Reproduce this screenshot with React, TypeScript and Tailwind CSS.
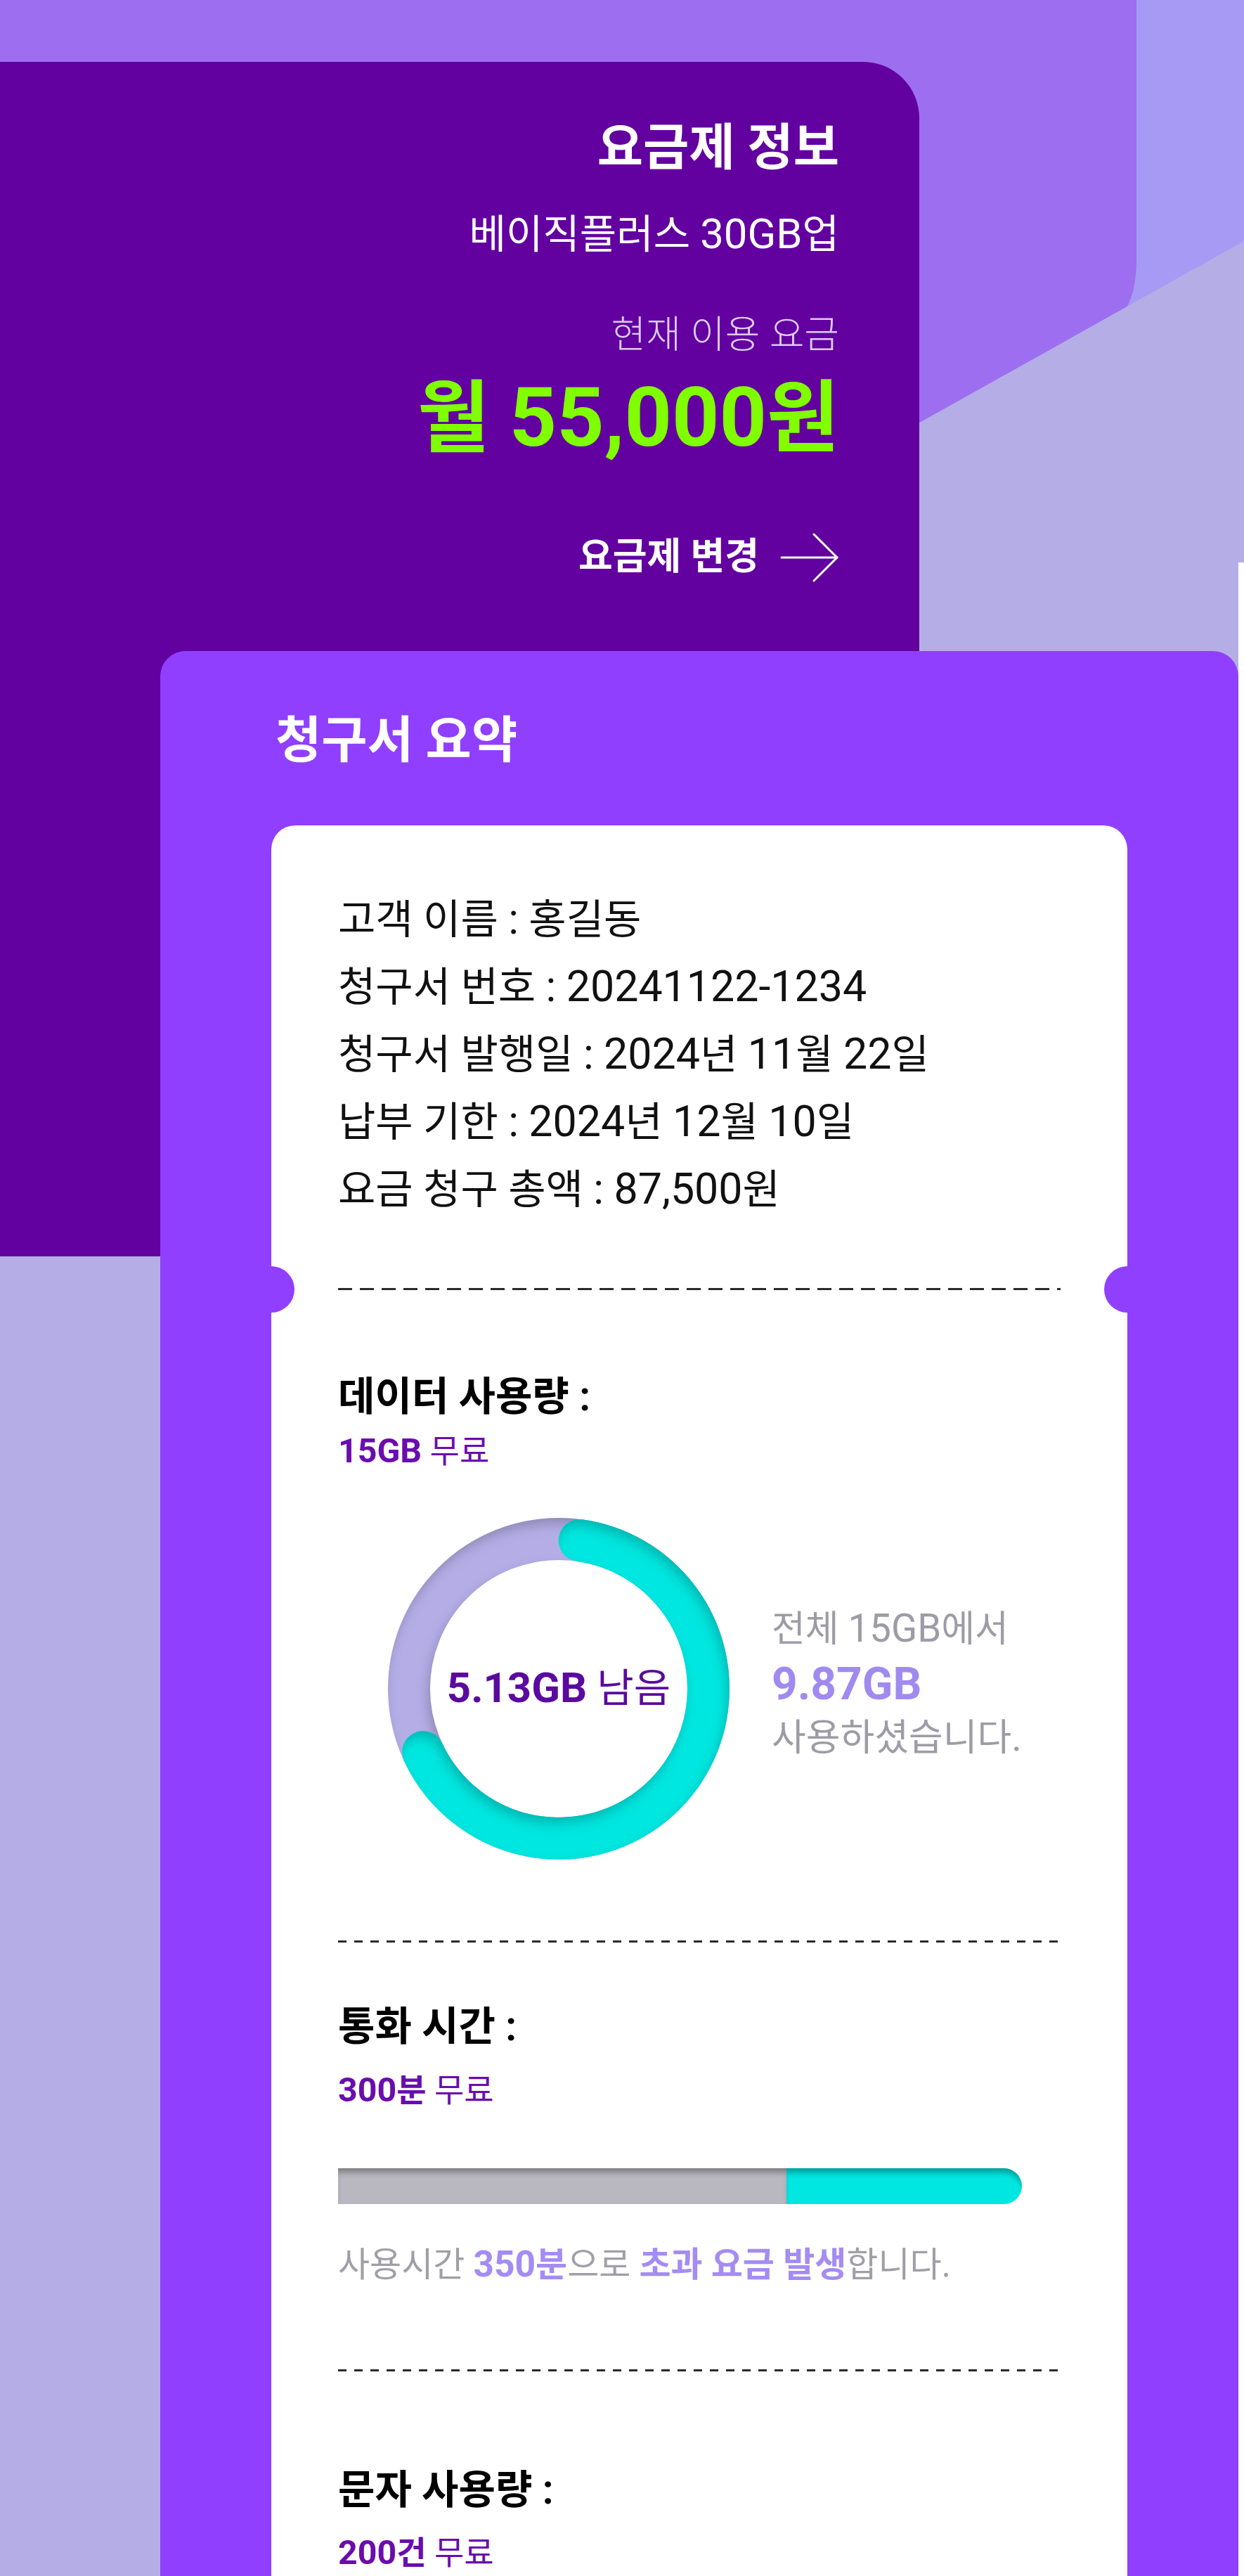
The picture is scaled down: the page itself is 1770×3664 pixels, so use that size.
import React from "react";

// 한글이 아닌 글자(숫자, 영문, 기호)는 조금 크게 보여준다
function mix(text: string) {
  return text.split(/([^\u3131-\u318E\uAC00-\uD7A3\s]+)/).map((part, i) =>
    i % 2 === 1 ? (
      <span key={i} className="text-[1.05em] leading-[0]">
        {part}
      </span>
    ) : (
      part
    )
  );
}

function Donut() {
  const r = 213;
  const c = 2 * Math.PI * r;
  const used = 9.87 / 15;
  return (
    <svg width="486" height="486" viewBox="0 0 486 486">
      <defs>
        <filter id="inner" x="-10%" y="-10%" width="120%" height="120%">
          <feOffset in="SourceAlpha" dx="-4" dy="9" result="off" />
          <feGaussianBlur in="off" stdDeviation="8" result="blur" />
          <feComposite in="SourceAlpha" in2="blur" operator="arithmetic" k2="1" k3="-1" result="diff" />
          <feFlood floodColor="#000" floodOpacity="0.4" />
          <feComposite in2="diff" operator="in" result="shadow" />
          <feMerge>
            <feMergeNode in="SourceGraphic" />
            <feMergeNode in="shadow" />
          </feMerge>
        </filter>
      </defs>
      <g filter="url(#inner)">
        <circle cx="243" cy="243" r={r} fill="none" stroke="#b4ade6" strokeWidth="60" />
      </g>
      <g filter="url(#inner)">
        <circle
          cx="243"
          cy="243"
          r={r}
          fill="none"
          stroke="#00e6e0"
          strokeWidth="60"
          strokeLinecap="round"
          strokeDasharray={`${used * c} ${c}`}
          transform="rotate(-82 243 243)"
        />
      </g>
    </svg>
  );
}

function Dots() {
  return <div className="h-[3px] bg-[repeating-linear-gradient(90deg,#2a2a2a_0_12px,transparent_12px_23px)]" />;
}

export default function App() {
  const info = [
    "고객 이름 : 홍길동",
    "청구서 번호 : 20241122-1234",
    "청구서 발행일 : 2024년 11월 22일",
    "납부 기한 : 2024년 12월 10일",
    "요금 청구 총액 : 87,500원",
  ];

  return (
    <div className="relative min-h-[3664px] w-full overflow-hidden bg-[#b5aee6] font-['Roboto','Noto_Sans_CJK_KR',sans-serif]">
      {/* 배경 도형 */}
      <svg className="absolute left-0 top-0" width="1770" height="900" viewBox="0 0 1770 900">
        <rect width="1770" height="900" fill="#a79af4" />
        <path d="M0 0 H1617 V369 C1617 425 1600 452 1569 472 L1569 900 L0 900 Z" fill="#9d6ef0" />
        <polygon points="1770,343 1770,900 774,900" fill="#b5aee6" />
      </svg>
      <div className="absolute bottom-0 right-0 top-[800px] w-[8px] bg-white" />

      <div className="relative pt-[88px]">
        {/* 요금제 정보 */}
        <section className="h-[1699px] w-[1308px] rounded-tr-[80px] bg-[#6200a0] pr-[114px] pt-[82px] text-right text-white">
          <h2 className="text-[71px] font-bold leading-[80px]">요금제 정보</h2>
          <p className="mt-[52px] text-[57px] leading-[64px]">{mix("베이직플러스 30GB업")}</p>
          <p className="mt-[81px] text-[54px] font-light leading-[60px] text-[#dccbf5]">현재 이용 요금</p>
          <p className="mt-[29px] text-[112px] font-bold leading-[120px] text-[#80ff00]">{mix("월 55,000원")}</p>
          <div className="mt-[102px] flex h-[70px] items-center justify-end gap-[30px]">
            <span className="text-[53px] font-bold">요금제 변경</span>
            <svg width="84" height="70" viewBox="0 0 84 70" fill="none" stroke="#fff" strokeWidth="3" strokeLinecap="round" strokeLinejoin="round">
              <path d="M2 35 H81" />
              <path d="M48 2 L81 35 L48 68" />
            </svg>
          </div>
        </section>

        {/* 청구서 요약 */}
        <section className="-mt-[861px] ml-[228px] w-[1534px] rounded-t-[36px] bg-[#903fff] px-[158px] pt-[87px]">
          <h2 className="ml-[6px] text-[71px] font-bold leading-[80px] text-white">청구서 요약</h2>

          <div className="mt-[81px] rounded-t-[34px] bg-white px-[95px] pb-[200px] pt-[86px]">
            {info.map((t) => (
              <p key={t} className="text-[58px] leading-[96px] text-[#111]">
                {mix(t)}
              </p>
            ))}

            {/* 절취선 */}
            <div className="relative -mx-[95px] mt-[92px] px-[95px]">
              <div className="absolute -left-[33px] top-1/2 h-[66px] w-[66px] -translate-y-1/2 rounded-full bg-[#903fff]" />
              <div className="absolute -right-[33px] top-1/2 h-[66px] w-[66px] -translate-y-1/2 rounded-full bg-[#903fff]" />
              <div className="h-[3px] bg-[repeating-linear-gradient(90deg,#2a2a2a_0_20px,transparent_20px_31px)]" />
            </div>

            {/* 데이터 */}
            <h3 className="mt-[120px] text-[57px] font-semibold leading-[64px] text-black">{mix("데이터 사용량 :")}</h3>
            <p className="mt-[17px] text-[46px] leading-[56px] text-[#6a0dad]">
              <b className="font-bold">{mix("15GB")}</b> 무료
            </p>

            <div className="mt-[67px] flex items-start pl-[71px]">
              <div className="relative h-[486px] w-[486px]">
                <Donut />
                <div className="absolute inset-0 flex items-center justify-center text-[57px] text-[#5a0a9e]">
                  <span>
                    <b className="font-bold">{mix("5.13GB")}</b> 남음
                  </span>
                </div>
              </div>
              <div className="ml-[60px] mt-[121px]">
                <p className="text-[52px] leading-[76px] text-[#9d9ca6]">{mix("전체 15GB에서")}</p>
                <p className="text-[61px] font-bold leading-[80px] text-[#a08af0]">{mix("9.87GB")}</p>
                <p className="text-[53px] leading-[72px] text-[#9d9ca6]">{mix("사용하셨습니다.")}</p>
              </div>
            </div>

            <div className="mt-[115px]">
              <Dots />
            </div>

            {/* 통화 */}
            <h3 className="mt-[88px] text-[57px] font-semibold leading-[64px] text-black">{mix("통화 시간 :")}</h3>
            <p className="mt-[30px] text-[46px] leading-[56px] text-[#6a0dad]">
              <b className="font-bold">{mix("300분")}</b> 무료
            </p>

            <div className="mt-[83px] flex h-[51px] w-[973px]">
              <div className="w-[638px] bg-[#b9b8c0] shadow-[inset_0_10px_9px_-4px_rgba(0,0,0,0.32)]" />
              <div className="flex-1 rounded-r-full bg-[#00e6e0] shadow-[inset_0_10px_9px_-4px_rgba(0,0,0,0.32)]" />
            </div>

            <p className="mt-[59px] text-[49px] leading-[56px] text-[#a09fa8]">
              사용시간 <b className="font-bold text-[#a48cf2]">{mix("350분")}</b>으로{" "}
              <b className="font-bold text-[#a48cf2]">초과 요금 발생</b>합니다{mix(".")}
            </p>

            <div className="mt-[120px]">
              <Dots />
            </div>

            {/* 문자 */}
            <h3 className="mt-[137px] text-[57px] font-semibold leading-[64px] text-black">{mix("문자 사용량 :")}</h3>
            <p className="mt-[29px] text-[46px] leading-[56px] text-[#6a0dad]">
              <b className="font-bold">{mix("200건")}</b> 무료
            </p>
          </div>
        </section>
      </div>
    </div>
  );
}
